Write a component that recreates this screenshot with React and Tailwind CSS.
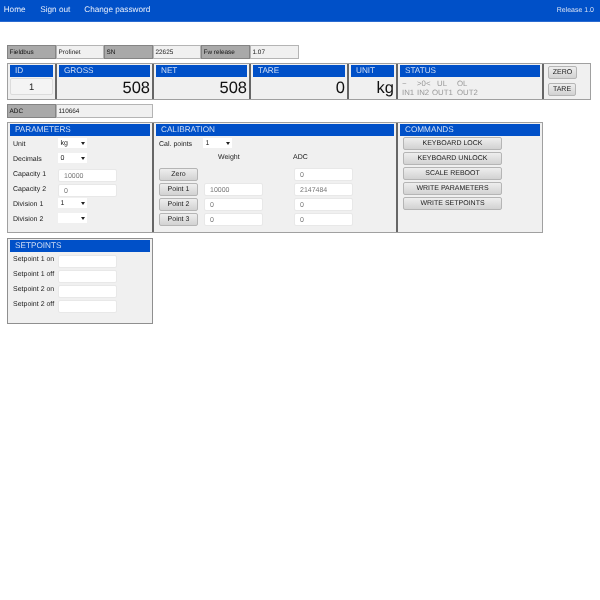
function Head({ children }) {
  return <div className="h-[12px] bg-[#0050c8] text-[#d0def4] text-[8.2px] leading-[12px] pl-[5px]">{children}</div>;
}

function InfoPair({ label, value, w = 'w-[49px]', w2 = 'w-[48px]' }) {
  return (
    <>
      <div className={`${w} h-[14px] bg-[#a9a9a9] border-[1.5px] border-[#848484] text-[6.4px] leading-[13px] pl-[1.5px] text-[#111]`}>{label}</div>
      <div className={`${w2} h-[14px] bg-[#f0f0f0] border border-[#b4b4b4] text-[6.4px] leading-[13px] pl-[1.5px] text-[#222]`}>{value}</div>
    </>
  );
}

function Measure({ title, value, w }) {
  return (
    <div className={`${w} shrink-0 border-r-2 border-[#666] px-[2px] pt-[1px]`}>
      <Head>{title}</Head>
      <div className="text-right text-[16.5px] leading-[23px] text-[#111]">{value}</div>
    </div>
  );
}

function Select({ value }) {
  return (
    <div className="w-[29px] h-[10px] bg-white flex items-center justify-between pl-[2.5px] pr-[2.5px] text-[7px] text-[#222]">
      <span className="leading-[10px] mt-[2px]">{value}</span>
      <svg width="4" height="3" viewBox="0 0 4 3"><polygon points="0,0 4,0 2,3" fill="#222" /></svg>
    </div>
  );
}

function Input({ value }) {
  return (
    <div className="w-[59px] h-[13px] bg-white border border-[#e8e8e8] rounded-[2px] pl-[5px] text-[7px] leading-[13px] text-[#777]">{value}</div>
  );
}

function Btn({ children, w }) {
  return (
    <div className={`${w} h-[13px] shrink-0 rounded-[2px] border border-[#b5b5b5] bg-gradient-to-b from-[#eeeeee] to-[#d2d2d2] text-center text-[7px] leading-[12px] text-[#222]`}>
      {children}
    </div>
  );
}

function FormRow({ label, children }) {
  return (
    <div className="h-[15px] flex items-start">
      <div className="w-[45px] text-[7px] leading-[14px] text-[#222] shrink-0">{label}</div>
      {children}
    </div>
  );
}

function CalRow({ label, weight, adc }) {
  return (
    <div className="h-[15px] flex items-start">
      <Btn w="w-[39px]">{label}</Btn>
      <div className="w-[59px] ml-[6px] mr-[31px]">{weight !== undefined && <Input value={weight} />}</div>
      <Input value={adc} />
    </div>
  );
}

export default function App() {
  return (
    <div className="w-[600px] h-[600px] bg-white overflow-hidden font-['Liberation_Sans',Arial,sans-serif] [text-rendering:geometricPrecision] blur-[0.3px]">
      <nav className="h-[22px] bg-[#0050c8] border-b border-[#2a6ad0] flex items-center pb-[1px] text-[#e6eefb] text-[8.2px] pl-[3.7px] pr-[6px]">
        <span className="mr-[14.7px]">Home</span>
        <span className="mr-[14px]">Sign out</span>
        <span>Change password</span>
        <span className="ml-auto mt-[3px] text-[7px] text-[#d5e0f5]">Release 1.0</span>
      </nav>

      <div className="pl-[7px] pt-[23px]">
        <div className="flex">
          <InfoPair label="Fieldbus" value="Profinet" />
          <InfoPair label="SN" value="22625" />
          <InfoPair label="Fw release" value="1.07" w2="w-[49px]" />
        </div>

        <div className="mt-[4px] w-[584px] h-[37px] flex border border-[#a0a0a0] bg-[#f0f0f0]">
          <div className="w-[49px] shrink-0 border-r-2 border-[#666] px-[2px] pt-[1px]">
            <Head>ID</Head>
            <div className="mt-[1px] h-[17px] border border-[#dcdcdc] rounded-[2px] bg-[#f4f4f4] text-center text-[9.4px] leading-[15px] text-[#222]">1</div>
          </div>
          <Measure title="GROSS" value="508" w="w-[97px]" />
          <Measure title="NET" value="508" w="w-[97px]" />
          <Measure title="TARE" value="0" w="w-[98px]" />
          <Measure title="UNIT" value="kg" w="w-[49px]" />
          <div className="w-[146px] shrink-0 border-r-2 border-[#666] px-[2px] pt-[1px]">
            <Head>STATUS</Head>
            <div className="grid grid-cols-[15px_15px_25px_25px] pl-[2px] pt-[2px] text-[7.8px] leading-[9px] text-[#999]">
              <span>~</span><span>&gt;0&lt;</span><span className="pl-[5px]">UL</span><span>OL</span>
              <span>IN1</span><span>IN2</span><span>OUT1</span><span>OUT2</span>
            </div>
          </div>
          <div className="flex-1 pl-[4px] pt-[2px] flex flex-col gap-[4px]">
            <Btn w="w-[29px]">ZERO</Btn>
            <Btn w="w-[28px]">TARE</Btn>
          </div>
        </div>

        <div className="mt-[4px] flex">
          <InfoPair label="ADC" value="110664" w2="w-[97px]" />
        </div>

        <div className="mt-[4px] flex w-[536px] h-[111px] border border-[#a0a0a0] bg-[#f0f0f0]">
          <div className="w-[146px] shrink-0 border-r-2 border-[#666] px-[2px] pt-[1px]">
            <Head>PARAMETERS</Head>
            <div className="pl-[3px] pt-[2px]">
              <FormRow label="Unit"><Select value="kg" /></FormRow>
              <FormRow label="Decimals"><Select value="0" /></FormRow>
              <FormRow label="Capacity 1"><div className="mt-[1px]"><Input value="10000" /></div></FormRow>
              <FormRow label="Capacity 2"><div className="mt-[1px]"><Input value="0" /></div></FormRow>
              <FormRow label="Division 1"><Select value="1" /></FormRow>
              <FormRow label="Division 2"><Select value="" /></FormRow>
            </div>
          </div>

          <div className="w-[244px] shrink-0 border-r-2 border-[#666] px-[2px] pt-[1px]">
            <Head>CALIBRATION</Head>
            <div className="pl-[3px] pt-[2px]">
              <div className="h-[15px] flex items-start">
                <div className="w-[44px] text-[7px] leading-[14px] text-[#222]">Cal. points</div>
                <Select value="1" />
              </div>
              <div className="h-[15px] flex items-start text-[7px] leading-[9px] text-[#222]">
                <span className="ml-[59px] w-[75px]">Weight</span>
                <span>ADC</span>
              </div>
              <CalRow label="Zero" adc="0" />
              <CalRow label="Point 1" weight="10000" adc="2147484" />
              <CalRow label="Point 2" weight="0" adc="0" />
              <CalRow label="Point 3" weight="0" adc="0" />
            </div>
          </div>

          <div className="flex-1 px-[2px] pt-[1px]">
            <Head>COMMANDS</Head>
            <div className="pl-[3px] pt-[1px] flex flex-col gap-[2px]">
              <Btn w="w-[99px]">KEYBOARD LOCK</Btn>
              <Btn w="w-[99px]">KEYBOARD UNLOCK</Btn>
              <Btn w="w-[99px]">SCALE REBOOT</Btn>
              <Btn w="w-[99px]">WRITE PARAMETERS</Btn>
              <Btn w="w-[99px]">WRITE SETPOINTS</Btn>
            </div>
          </div>
        </div>

        <div className="mt-[5px] w-[146px] h-[86px] border border-[#8f8f8f] bg-[#f0f0f0] px-[2px] pt-[1px]">
          <Head>SETPOINTS</Head>
          <div className="pl-[3px] pt-[1px]">
            <FormRow label="Setpoint 1 on"><div className="mt-[2px]"><Input value="" /></div></FormRow>
            <FormRow label="Setpoint 1 off"><div className="mt-[2px]"><Input value="" /></div></FormRow>
            <FormRow label="Setpoint 2 on"><div className="mt-[2px]"><Input value="" /></div></FormRow>
            <FormRow label="Setpoint 2 off"><div className="mt-[2px]"><Input value="" /></div></FormRow>
          </div>
        </div>
      </div>
    </div>
  );
}
